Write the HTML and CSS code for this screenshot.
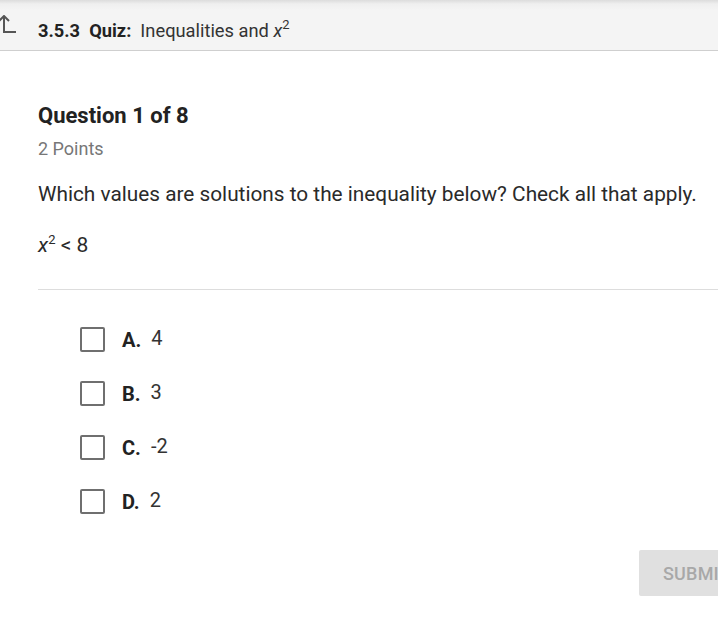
FILE: index.html
```html
<!DOCTYPE html>
<html>
<head>
<meta charset="utf-8">
<link rel="stylesheet" href="styles.css">
</head>
<body>
<header class="topbar">
  <svg class="back" width="20" height="20" viewBox="0 0 20 20">
    <path d="M0 6 L5 1 L10 6 M5 1 V17 H17" fill="none" stroke="#555" stroke-width="2"/>
  </svg>
  <span class="crumb"><b>3.5.3</b>&nbsp; <b>Quiz:</b>&nbsp; Inequalities and <i>x</i><sup>2</sup></span>
</header>
<main class="content">
  <h1 class="qtitle">Question 1 of 8</h1>
  <div class="points">2 Points</div>
  <p class="prompt">Which values are solutions to the inequality below? Check all that apply.</p>
  <p class="expr"><i>x</i><sup>2</sup> &lt; 8</p>
  <hr class="divider">
  <ul class="options">
    <li class="option"><span class="box"></span><b>A.</b><span class="val">4</span></li>
    <li class="option"><span class="box"></span><b>B.</b><span class="val">3</span></li>
    <li class="option"><span class="box"></span><b>C.</b><span class="val">-2</span></li>
    <li class="option"><span class="box"></span><b>D.</b><span class="val">2</span></li>
  </ul>
  <div class="actions"><button class="submit">SUBMIT</button></div>
</main>
</body>
</html>
```
FILE: styles.css
```css
html, body { margin: 0; padding: 0; background: #fff; overflow: hidden; }
body { font-family: Roboto, "Liberation Sans", sans-serif; color: #222; width: 718px; }
.topbar {
  height: 50px;
  background: linear-gradient(#dcdcdc 0, #efefef 4px, #f4f4f4 10px, #f4f4f4 100%);
  border-bottom: 1px solid #cfcfcf;
  display: flex;
  align-items: center;
  position: relative;
}
.back { position: absolute; left: -1px; top: 15px; }
.crumb { margin-left: 38px; font-size: 18.3px; color: #333; padding-top: 11px; }
.crumb b { font-weight: 700; color: #222; }
.crumb sup, .expr sup { font-size: 13px; vertical-align: 8px; line-height: 0; }
.crumb i, .expr i { font-style: italic; }
.content { padding: 0 0 0 38px; }
.qtitle { margin: 52px 0 0; font-size: 22px; font-weight: 700; line-height: 26px; color: #222; }
.points { margin-top: 10px; font-size: 18px; color: #777; line-height: 20px; }
.prompt { margin: 23px 0 0; font-size: 20.8px; line-height: 24px; color: #2a2a2a; }
.expr { margin: 27px 0 0; font-size: 21px; line-height: 24px; color: #2a2a2a; }
.divider { margin: 32px 0 0; border: 0; border-top: 1px solid #ddd; }
.options { list-style: none; margin: 37px 0 0; padding: 0 0 0 42px; display: flex; flex-direction: column; gap: 29px; }
.option { display: flex; align-items: center; height: 25px; font-size: 20px; }
.box { width: 21px; height: 21px; border: 2px solid #6f6f6f; border-radius: 2px; margin-right: 17px; }
.option b { font-weight: 700; color: #222; margin-right: 10px; }
.val { color: #333; position: relative; top: -2px; }
.actions { display: flex; justify-content: flex-end; margin-top: 36px; }
.submit {
  margin-right: -40px;
  width: 119px; height: 46px;
  background: #e0e0e0; border: 0; border-radius: 2px;
  font-family: Roboto, "Liberation Sans", sans-serif;
  font-size: 18px; font-weight: 500; color: #a8a8a8; text-align: left; padding-left: 24px;
  letter-spacing: 0.2px;
}
```
